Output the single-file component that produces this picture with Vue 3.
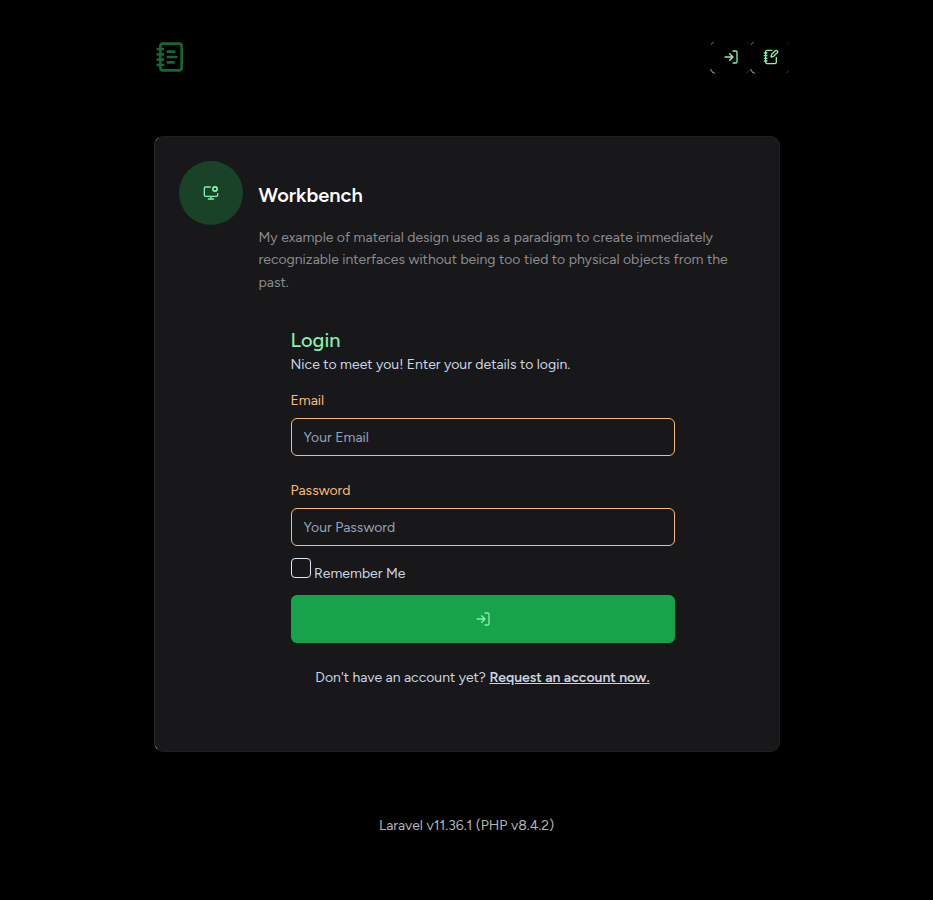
<script setup>
import { ref } from 'vue'

const email = ref('')
const password = ref('')
const remember = ref(false)
</script>

<template>
  <div class="page">
    <header class="top">
      <a class="logo" href="#" aria-label="Home">
        <svg class="icon icon-lg" viewBox="0 0 24 24">
          <path d="M2 6h4M2 10h4M2 14h4M2 18h4" />
          <rect width="16" height="20" x="4" y="2" rx="2" />
          <path d="M9.5 8h5M9.5 12H16M9.5 16H14" />
        </svg>
      </a>
      <nav class="nav">
        <a class="nav-link" href="#" aria-label="Login">
          <svg class="icon" viewBox="0 0 24 24">
            <path d="M15 3h4a2 2 0 0 1 2 2v14a2 2 0 0 1-2 2h-4" />
            <path d="m10 17 5-5-5-5M15 12H3" />
          </svg>
        </a>
        <a class="nav-link" href="#" aria-label="Register">
          <svg class="icon" viewBox="0 0 24 24">
            <path d="M13.4 2H6a2 2 0 0 0-2 2v16a2 2 0 0 0 2 2h12a2 2 0 0 0 2-2v-7.4" />
            <path d="M2 6h4M2 10h4M2 14h4M2 18h4" />
            <path d="M21.378 5.626a1 1 0 1 0-3.004-3.004l-5.01 5.012a2 2 0 0 0-.506.854l-.837 2.87a.5.5 0 0 0 .62.62l2.87-.837a2 2 0 0 0 .854-.506z" />
          </svg>
        </a>
      </nav>
    </header>

    <main class="card">
      <div class="badge">
        <svg class="icon" viewBox="0 0 24 24">
          <path d="M12 17v4M8 21h8" />
          <path d="m14.305 7.53.923-.382M15.228 4.852l-.923-.383M16.852 3.228l-.383-.924M16.852 8.772l-.383.923" />
          <path d="m19.148 3.228.383-.924M19.53 9.696l-.382-.924M20.772 4.852l.924-.383M20.772 7.148l.924.383" />
          <path d="M22 13v2a2 2 0 0 1-2 2H4a2 2 0 0 1-2-2V5a2 2 0 0 1 2-2h7" />
          <circle cx="18" cy="6" r="3" />
        </svg>
      </div>
      <div class="content">
        <h2 class="title">Workbench</h2>
        <p class="intro">
          My example of material design used as a paradigm to create immediately
          recognizable interfaces without being too tied to physical objects from the
          past.
        </p>
        <form class="form" @submit.prevent>
          <h4 class="form-title">Login</h4>
          <p class="lead">Nice to meet you! Enter your details to login.</p>
          <label class="label" for="email">Email</label>
          <input id="email" v-model="email" class="input" type="email" placeholder="Your Email" />
          <label class="label second" for="password">Password</label>
          <input id="password" v-model="password" class="input" type="password" placeholder="Your Password" />
          <div class="remember">
            <input id="remember" v-model="remember" class="check" type="checkbox" />
            <label class="check-label" for="remember">Remember Me</label>
          </div>
          <button class="submit" type="submit" aria-label="Login">
            <svg class="icon" viewBox="0 0 24 24">
              <path d="M15 3h4a2 2 0 0 1 2 2v14a2 2 0 0 1-2 2h-4" />
              <path d="m10 17 5-5-5-5M15 12H3" />
            </svg>
          </button>
          <p class="request">
            Don't have an account yet?
            <a class="request-link" href="#">Request an account now.</a>
          </p>
        </form>
      </div>
    </main>

    <footer class="footer">Laravel v11.36.1 (PHP v8.4.2)</footer>
  </div>
</template>

<style>
body {
  background: #000;
}
</style>

<style scoped>
.page,
.page * {
  box-sizing: border-box;
}
.page {
  width: 933px;
  height: 900px;
  padding: 41px 153.5px 0;
  background: #000;
  font-family: Figtree, Lato, sans-serif;
  font-size: 14px;
  line-height: 20px;
}
h2,
h4,
p {
  margin: 0;
}
.icon {
  display: block;
  width: 16px;
  height: 16px;
  fill: none;
  stroke: currentColor;
  stroke-width: 2;
  stroke-linecap: round;
  stroke-linejoin: round;
}
.icon-lg {
  width: 32px;
  height: 32px;
}
.top {
  display: flex;
  justify-content: space-between;
  height: 95px;
  margin-right: -10px;
}
.logo {
  margin-left: 1px;
  color: #166534;
}
.nav {
  display: flex;
  gap: 2px;
}
.nav-link {
  position: relative;
  display: grid;
  place-items: center;
  width: 38px;
  height: 32px;
  color: #86efac;
}
.nav-link::before {
  content: '';
  position: absolute;
  inset: 0 0 -1px -2px;
  border: 1px solid #d4d4d4;
  border-radius: 6px;
  mask:
    linear-gradient(rgb(0 0 0 / 0.6), rgb(0 0 0 / 0.6)) 0 0 / 4px 4px no-repeat,
    linear-gradient(#000, #000) 0 100% / 5px 5px no-repeat,
    linear-gradient(rgb(0 0 0 / 0.15), rgb(0 0 0 / 0.15)) 100% 0 / 4px 4px no-repeat,
    linear-gradient(rgb(0 0 0 / 0.25), rgb(0 0 0 / 0.25)) 100% 100% / 4px 4px no-repeat;
}
.card {
  position: relative;
  display: flex;
  gap: 16px;
  width: 626px;
  height: 616px;
  padding: 24px;
  border: 1px solid #1f1f21;
  border-left-color: #2a2a2c;
  border-radius: 9px;
  background: #18181b;
}
.card::before {
  content: '';
  position: absolute;
  inset: -1px;
  border: 1px solid #888;
  border-radius: 9px;
  pointer-events: none;
  mask:
    linear-gradient(rgb(0 0 0 / 0.7), rgb(0 0 0 / 0.7)) 0 0 / 5px 5px no-repeat,
    linear-gradient(#000, #000) 0 100% / 3px 6px no-repeat;
}
.badge {
  display: grid;
  place-items: center;
  flex: none;
  width: 64px;
  height: 64px;
  border-radius: 50%;
  background: #194229;
  color: #86efac;
}
.content {
  flex: 1;
  padding-top: 20px;
}
.title {
  color: #fff;
  font-size: 20px;
  font-weight: 600;
  line-height: 28px;
}
.intro {
  margin-top: 17.5px;
  color: #8b8b8d;
  line-height: 22.75px;
}
.form {
  width: 384px;
  margin: 31.5px 0 0 32px;
}
.form-title {
  color: #86efac;
  font-size: 20px;
  font-weight: 500;
  line-height: 28px;
}
.lead {
  padding-top: 1px;
  color: #cbd5e1;
}
.label {
  display: block;
  margin-top: 16px;
  color: #fdba74;
}
.second {
  margin-top: 25px;
}
.input {
  display: block;
  width: 100%;
  height: 38px;
  margin-top: 7px;
  padding: 8px 12px;
  border: 1px solid #fdba74;
  border-radius: 6px;
  outline: none;
  background: transparent;
  color: #cbd5e1;
  font: inherit;
}
.input::placeholder {
  color: #94a3b8;
  opacity: 1;
}
.remember {
  display: flex;
  gap: 3.5px;
  height: 25px;
  margin-top: 12px;
}
.check {
  appearance: none;
  width: 20px;
  height: 20px;
  margin: 0;
  border: 1px solid #e2e8f0;
  border-radius: 4px;
}
.check-label {
  padding-top: 6px;
  color: #cbd5e1;
}
.submit {
  display: grid;
  place-items: center;
  width: 100%;
  height: 48px;
  margin-top: 12px;
  padding: 0;
  border: 0;
  border-radius: 6px;
  background: #16a34a;
  color: #86efac;
}
.request {
  margin-top: 25px;
  color: #cbd5e1;
  text-align: center;
}
.request-link {
  color: inherit;
  font-weight: 600;
  text-decoration: underline;
}
.footer {
  margin-top: 64px;
  color: #b3b3b3;
  text-align: center;
}
</style>
